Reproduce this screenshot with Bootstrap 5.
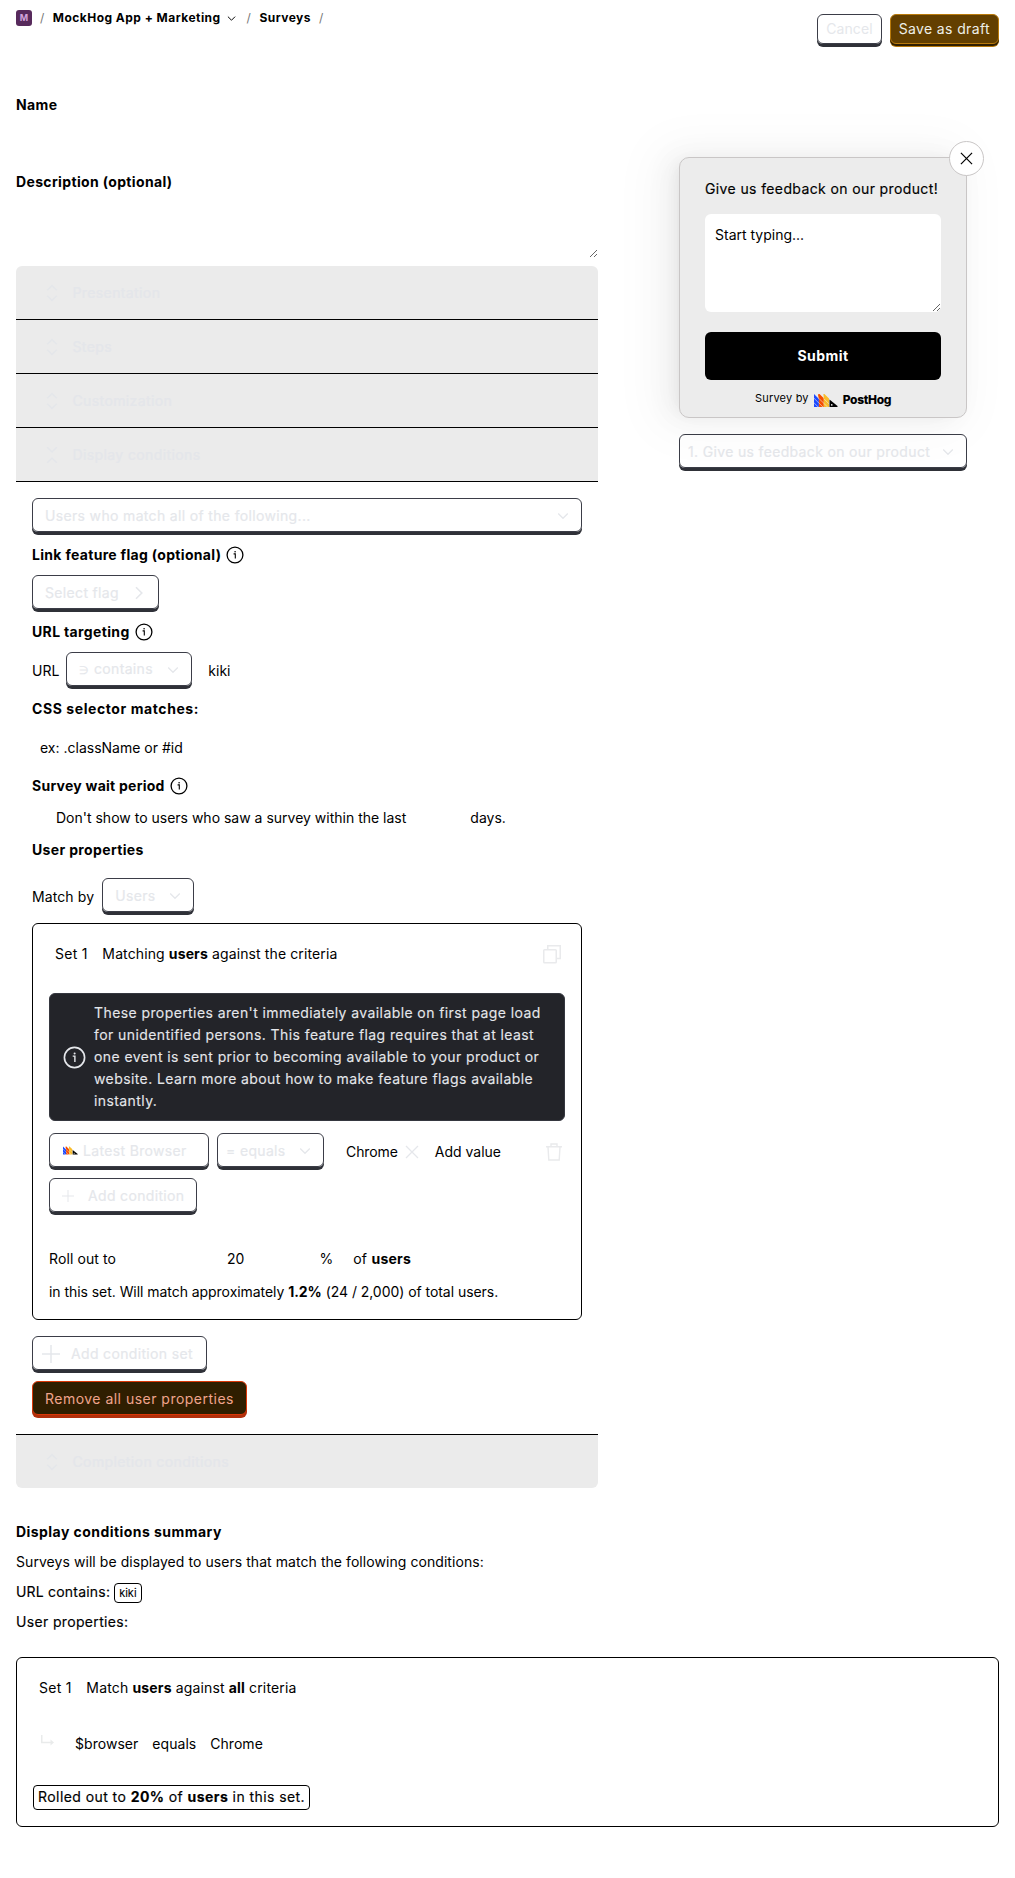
<!DOCTYPE html>
<html lang="en">
<head>
<meta charset="utf-8">
<meta name="viewport" content="width=device-width, initial-scale=1">
<title>New survey</title>
<link href="https://cdn.jsdelivr.net/npm/bootstrap@5.3.0/dist/css/bootstrap.min.css" rel="stylesheet">
<style>
  body { font-family: Inter, "Liberation Sans", sans-serif; font-size: 14px; line-height: 20px; color: #000; background: #fff; }
  svg { display: block; flex: none; }
  strong { font-weight: 700; }
  .page { height: 1878px; padding: 0 16px; }
  .med { letter-spacing: .38px; -webkit-text-stroke: .15px currentColor; }
  .airy { letter-spacing: .1px; }
  .topbar { height: 93px; }
  .crumbs { font-size: 12px; font-weight: 700; letter-spacing: .47px; height: 36px; }
  .crumbs .sep { color: #777; font-weight: 400; }
  .crumbs .chev { margin-left: 6px; margin-right: 3px; }
  .avatar { width: 16px; height: 16px; border-radius: 3px; background: #572a5c; color: #d3a4dc; font-size: 9px; letter-spacing: 0; }
  .top-actions { padding-top: 14px; }
  .field-label { height: 24px; font-weight: 700; letter-spacing: .35px; gap: 5px; }
  .survey-form { width: 582px; }
  .survey-form .plain-input { height: 37px; }
  .survey-form textarea { height: 56px; border: 0; resize: vertical; display: block; width: 100%; outline: 0; background: transparent; }

  .lbtn { display: inline-flex; align-items: center; height: 34px; margin-bottom: 3px; padding: 1px 12px 0; white-space: nowrap;
    background: transparent; border: 1px solid #3b3d47; border-radius: 6px; box-shadow: 0 3px 0 #2f3138; color: #e5e7eb; letter-spacing: .34px; -webkit-text-stroke: .15px currentColor; }
  .lbtn-sm { height: 30px; padding: 0 8px; -webkit-text-stroke: 0; letter-spacing: .1px; }
  .lbtn-save { background: #633f00; border-color: #b97a0c; box-shadow: 0 2px 0 #311f00, 0 3px 0 #b97a0c; color: #eeefe9; letter-spacing: .37px; }
  .lbtn-danger { width: 215px; background: #2f1e00; border-color: #db3707; box-shadow: 0 3px 0 #b12f0b; color: #f0a48d; letter-spacing: .48px; -webkit-text-stroke: 0; }
  .lbtn-narrow { padding-left: 8px; }
  .w-flag { width: 127px; }
  .w-contains { width: 126px; }
  .w-users { width: 92px; }
  .w-prop { width: 160px; gap: 5px; padding-left: 13px; }
  .w-op { width: 107px; }

  .sections { border-radius: 6px; overflow: hidden; }
  .section-head { height: 54px; padding-left: 30px; gap: 14.500px; background: #ebebeb; color: #e4e6ea; border-bottom: 1px solid #000; letter-spacing: .39px; -webkit-text-stroke: .15px currentColor; }
  .section-head.last { border-bottom: 0; border-top: 1px solid #000; }
  .section-body { padding: 16px; }

  .cond-set { border: 1px solid #000; border-radius: 6px; height: 397px; padding: 16px; }
  .cond-title { height: 28px; padding: 0 4px 0 6px; gap: 14.500px; letter-spacing: .12px; }
  .info-banner { height: 128px; margin-top: 25px; padding: 0 14px 0 13px; gap: 8px; border: 1px solid #35373f; border-radius: 6px; background: #232429; color: #e5e7eb; line-height: 22px; letter-spacing: .41px; white-space: nowrap; -webkit-text-stroke: .1px currentColor; }
  .btn-gap { gap: 8px; }
  .filter-row { margin-top: 12px; padding-right: 3px; }
  .filter-row .val { margin-left: 14px; letter-spacing: -.1px; }
  .filter-row .gray-x { margin-left: -1px; color: #e5e7eb; }
  .rollout { height: 20px; margin-top: 34px; }
  .rollout .num { margin-left: 111px; }
  .rollout .pct { margin-left: 75px; }
  .rollout .who { margin-left: 20px; letter-spacing: .25px; }
  .estimate { margin-top: 13px; letter-spacing: -.05px; }
  .days { margin-left: 64px; }

  .preview { width: 288px; margin: 64px 32px 0 0; }
  .survey-box { position: relative; height: 261px; padding: 21px 25px 0; border: 1px solid #c9c6c6; border-radius: 10px; background: #ececec;
    box-shadow: -6px 0 16px -8px rgba(0,0,0,.08), -9px 0 28px 0 rgba(0,0,0,.05), -12px 0 48px 16px rgba(0,0,0,.03); }
  .survey-close { position: absolute; top: -17px; right: -18px; width: 35px; height: 35px; border: 1px solid #c9c6c6; border-radius: 50%; background: #fff; color: #000; }
  .survey-box textarea { display: block; width: 236px; height: 98px; margin-top: 15px; padding: 11px 10px; border: 0; border-radius: 6px; background: #fff; color: #000; outline: 0; }
  .survey-box textarea::placeholder { color: #000; opacity: 1; }
  .survey-submit { display: block; width: 236px; height: 48px; margin-top: 20px; border: 0; border-radius: 6px; background: #000; color: #fff; font-weight: 700; letter-spacing: .45px; }
  .branding { margin-top: 8px; font-size: 11px; height: 20px; gap: 5px; letter-spacing: .2px; }
  .branding b { font-size: 12px; font-weight: 800; letter-spacing: -.35px; }
  .question-select { margin-top: 16px; padding-left: 8px; }

  .summary { margin-top: 34px; }
  .summary-line { height: 30px; }
  .summary-title { height: 20px; margin-bottom: 5px; font-weight: 700; letter-spacing: .45px; }
  .snack { border: 1px solid #000; border-radius: 4px; height: 20px; margin-top: 2px; padding: 0 4px; font-size: 11px; line-height: 18px; -webkit-text-stroke: .1px currentColor; }
  .summary-set { height: 170px; margin-top: 20px; border: 1px solid #000; border-radius: 6px; padding: 20px 16px 16px; }
  .set-line { gap: 14.500px; padding-left: 6px; letter-spacing: .15px; }
  .match-line { gap: 14px; margin-top: 36px; padding-left: 8px; letter-spacing: .04px; }
  .match-line svg { margin: 1px 7px 0 0; }
  .rolled { display: inline-block; height: 25px; margin-top: 31px; line-height: 22px; padding: 0 4px; border: 1px solid #000; border-radius: 4px; letter-spacing: .43px; }
</style>
</head>
<body>
<svg width="0" height="0" class="position-absolute">
  <defs>
    <symbol id="i-down" viewBox="0 0 12 12"><path d="M1.200 3.500 6 8.300l4.800-4.800" fill="none" stroke="currentColor" stroke-width="1.300"/></symbol>
    <symbol id="i-right" viewBox="0 0 14 14"><path d="M4 1.200 9.800 7 4 12.800" fill="none" stroke="currentColor" stroke-width="1.600"/></symbol>
    <symbol id="i-expand" viewBox="0 0 12 20"><path d="M1.300 7.200 6 2.500l4.700 4.700M1.300 12.800 6 17.500l4.700-4.700" fill="none" stroke="currentColor" stroke-width="1.500"/></symbol>
    <symbol id="i-collapse" viewBox="0 0 12 20"><path d="M1.300 2.300 6 7l4.700-4.700M1.300 17.700 6 13l4.700 4.700" fill="none" stroke="currentColor" stroke-width="1.500"/></symbol>
    <symbol id="i-info" viewBox="0 0 18 18"><circle cx="9" cy="9" r="7.900" fill="none" stroke="currentColor" stroke-width="1.300"/><path d="M7.600 7.900H9.300V12.600" fill="none" stroke="currentColor" stroke-width="1.100"/><circle cx="9.100" cy="5.800" r=".8" fill="currentColor"/></symbol>
    <symbol id="i-plus" viewBox="0 0 18 18"><path d="M9 0V18M0 9H18" fill="none" stroke="currentColor" stroke-width="1.500"/></symbol>
    <symbol id="i-x" viewBox="0 0 14 14"><path d="M1 1 13 13M13 1 1 13" fill="none" stroke="currentColor" stroke-width="1.300"/></symbol>
    <symbol id="i-hog" viewBox="0 0 24 13">
      <path fill="#1d4aff" d="M0 0 4.900 4.900V13H0z"/>
      <path fill="#f54e00" d="M4.500 0H5.500L9.800 4.300V13H4.900V4.900L4 1z"/>
      <path fill="#f9bd2b" d="M9.400 0H10.400L15 4.600V13H9.800V4.300z"/>
      <path d="M-1 3.200 4.900 9.100M-1 7.800 4.700 13.500M4.900 4.400 13.500 13M4.900 9 9.500 13.600M9.800 4.700 15 9.900" stroke="#ececec" stroke-width=".6"/>
      <path fill="#000" d="M15.500 5.500 23.500 12V13H15.500z"/><circle cx="17.800" cy="10.900" r=".8" fill="#fff"/>
    </symbol>
  </defs>
</svg>

<div class="page">
  <header class="topbar d-flex justify-content-between align-items-start">
    <nav class="crumbs d-flex align-items-center">
      <span class="avatar d-flex align-items-center justify-content-center">M</span>
      <span class="sep ms-2">/</span>
      <span class="ms-2">MockHog App + Marketing</span>
      <svg width="9" height="9" class="chev"><use href="#i-down"/></svg>
      <span class="sep ms-2">/</span>
      <span class="ms-2">Surveys</span>
      <span class="sep ms-2">/</span>
    </nav>
    <div class="d-flex btn-gap top-actions">
      <button class="lbtn lbtn-sm"><span>Cancel</span></button>
      <button class="lbtn lbtn-sm lbtn-save"><span>Save as draft</span></button>
    </div>
  </header>

  <main class="d-flex justify-content-between align-items-start">
    <form class="survey-form">
      <div class="field-label d-flex align-items-center mb-2">Name</div>
      <div class="plain-input mb-2"></div>
      <div class="field-label d-flex align-items-center mb-2">Description (optional)</div>
      <textarea class="mb-2" aria-label="Description"></textarea>

      <div class="sections">
        <div class="section-head d-flex align-items-center"><svg width="12" height="20"><use href="#i-expand"/></svg>Presentation</div>
        <div class="section-head d-flex align-items-center"><svg width="12" height="20"><use href="#i-expand"/></svg>Steps</div>
        <div class="section-head d-flex align-items-center"><svg width="12" height="20"><use href="#i-expand"/></svg>Customization</div>
        <div class="section-head d-flex align-items-center"><svg width="12" height="20"><use href="#i-collapse"/></svg>Display conditions</div>

        <div class="section-body d-flex flex-column btn-gap align-items-start">
          <button type="button" class="lbtn w-100 justify-content-between"><span>Users who match all of the following...</span><svg width="12" height="12"><use href="#i-down"/></svg></button>
          <div class="field-label d-flex align-items-center" style="letter-spacing:.31px">Link feature flag (optional)<svg width="18" height="18"><use href="#i-info"/></svg></div>
          <button type="button" class="lbtn w-flag justify-content-between"><span>Select flag</span><svg width="14" height="14"><use href="#i-right"/></svg></button>
          <div class="field-label d-flex align-items-center">URL targeting<svg width="18" height="18"><use href="#i-info"/></svg></div>
          <div class="d-flex align-items-center">
            <span>URL</span>
            <button type="button" class="lbtn w-contains justify-content-between" style="margin-left:7px"><span><span style="font-size:11px">∋</span> contains</span><svg width="12" height="12"><use href="#i-down"/></svg></button>
            <span class="ms-3">kiki</span>
          </div>
          <div class="field-label d-flex align-items-center" style="letter-spacing:.58px">CSS selector matches:</div>
          <div class="plain-input d-flex align-items-center px-2">ex: .className or #id</div>
          <div class="field-label d-flex align-items-center" style="letter-spacing:.25px">Survey wait period<svg width="18" height="18"><use href="#i-info"/></svg></div>
          <div class="d-flex align-items-center ps-4" style="height:24px"><span>Don't show to users who saw a survey within the last</span><span class="days">days.</span></div>
          <div class="field-label d-flex align-items-center">User properties</div>
          <div class="d-flex align-items-center btn-gap pt-2">
            <span class="airy">Match by</span>
            <button type="button" class="lbtn w-users justify-content-between"><span>Users</span><svg width="12" height="12"><use href="#i-down"/></svg></button>
          </div>

          <div class="cond-set w-100">
            <div class="cond-title d-flex align-items-center">
              <span style="letter-spacing:.3px">Set 1</span><span>Matching <strong>users</strong> against the criteria</span>
              <svg class="ms-auto" width="18" height="19" viewBox="0 0 18 19" fill="none" stroke="#e9eaec" stroke-width="1.500"><rect x=".75" y="4.750" width="12.500" height="13" rx=".8"/><path d="M4.750 4.500V.75H17.250V13.500H13.500"/></svg>
            </div>
            <div class="info-banner d-flex align-items-center">
              <svg width="23" height="23" viewBox="0 0 18 18"><use href="#i-info" width="18" height="18"/></svg>
              <div>These properties aren't immediately available on first page load<br>for unidentified persons. This feature flag requires that at least<br>one event is sent prior to becoming available to your product or<br>website. Learn more about how to make feature flags available<br>instantly.</div>
            </div>
            <div class="d-flex align-items-center btn-gap filter-row">
              <button type="button" class="lbtn w-prop"><svg width="15" height="9"><use href="#i-hog"/></svg><span>Latest Browser</span></button>
              <button type="button" class="lbtn w-op px-2 justify-content-between"><span>= equals</span><svg width="12" height="12" class="me-1"><use href="#i-down"/></svg></button>
              <span class="val">Chrome</span>
              <svg width="14" height="14" class="gray-x"><use href="#i-x"/></svg>
              <span class="ms-2">Add value</span>
              <svg class="ms-auto" width="16" height="18" viewBox="0 0 16 18" fill="none" stroke="#e9eaec" stroke-width="1.400"><path d="M0 3.700H16M5 3.500V1H11V3.500M2 4l.8 13H13.200L14 4"/></svg>
            </div>
            <button type="button" class="lbtn lbtn-narrow mt-2"><svg width="12" height="12" style="margin:0 14px 0 4px"><use href="#i-plus"/></svg><span>Add condition</span></button>
            <div class="d-flex align-items-center rollout"><span class="airy">Roll out to</span><span class="num">20</span><span class="pct">%</span><span class="who">of <strong>users</strong></span></div>
            <div class="estimate">in this set. Will match approximately <strong>1.2%</strong> (24 / 2,000) of total users.</div>
          </div>

          <button type="button" class="lbtn lbtn-narrow mt-2" style="width:175px"><svg width="18" height="18" style="margin:0 11px 0 1px"><use href="#i-plus"/></svg><span>Add condition set</span></button>
          <button type="button" class="lbtn lbtn-danger"><span>Remove all user properties</span></button>
        </div>
        <div class="section-head last d-flex align-items-center"><svg width="12" height="20"><use href="#i-expand"/></svg>Completion conditions</div>
      </div>
    </form>

    <aside class="preview">
      <div class="survey-box">
        <button class="survey-close d-flex align-items-center justify-content-center p-0" aria-label="Close"><svg width="13" height="13"><use href="#i-x"/></svg></button>
        <div class="med">Give us feedback on our product!</div>
        <textarea placeholder="Start typing..."></textarea>
        <button class="survey-submit">Submit</button>
        <div class="branding d-flex align-items-center justify-content-center"><span>Survey by</span><svg class="mt-1" width="24" height="13"><use href="#i-hog"/></svg><b class="mt-1">PostHog</b></div>
      </div>
      <button class="lbtn w-100 question-select justify-content-between"><span>1. Give us feedback on our product</span><svg width="12" height="12"><use href="#i-down"/></svg></button>
    </aside>
  </main>

  <section class="summary">
    <div class="summary-title">Display conditions summary</div>
    <div class="summary-line d-flex align-items-center" style="letter-spacing:.06px">Surveys will be displayed to users that match the following conditions:</div>
    <div class="summary-line d-flex align-items-center"><span class="med" style="letter-spacing:.2px">URL contains:</span><span class="snack ms-1">kiki</span></div>
    <div class="summary-line d-flex align-items-center"><span class="med" style="letter-spacing:.34px">User properties:</span></div>
    <div class="summary-set">
      <div class="d-flex set-line"><span style="letter-spacing:.3px">Set 1</span><span>Match <strong>users</strong> against <strong>all</strong> criteria</span></div>
      <div class="d-flex match-line">
        <svg width="13" height="12" viewBox="0 0 13 12"><path d="M.75 0V7.500H10" fill="none" stroke="#e9ebeb" stroke-width="1.500"/><path d="M9.500 4.500 13 7.500 9.500 10.500z" fill="#e9ebeb"/></svg>
        <span>$browser</span><span>equals</span><span>Chrome</span></div>
      <div class="med rolled">Rolled out to <strong>20%</strong> of <strong>users</strong> in this set.</div>
    </div>
  </section>
</div>
<script src="https://cdn.jsdelivr.net/npm/bootstrap@5.3.0/dist/js/bootstrap.bundle.min.js"></script>
</body>
</html>
